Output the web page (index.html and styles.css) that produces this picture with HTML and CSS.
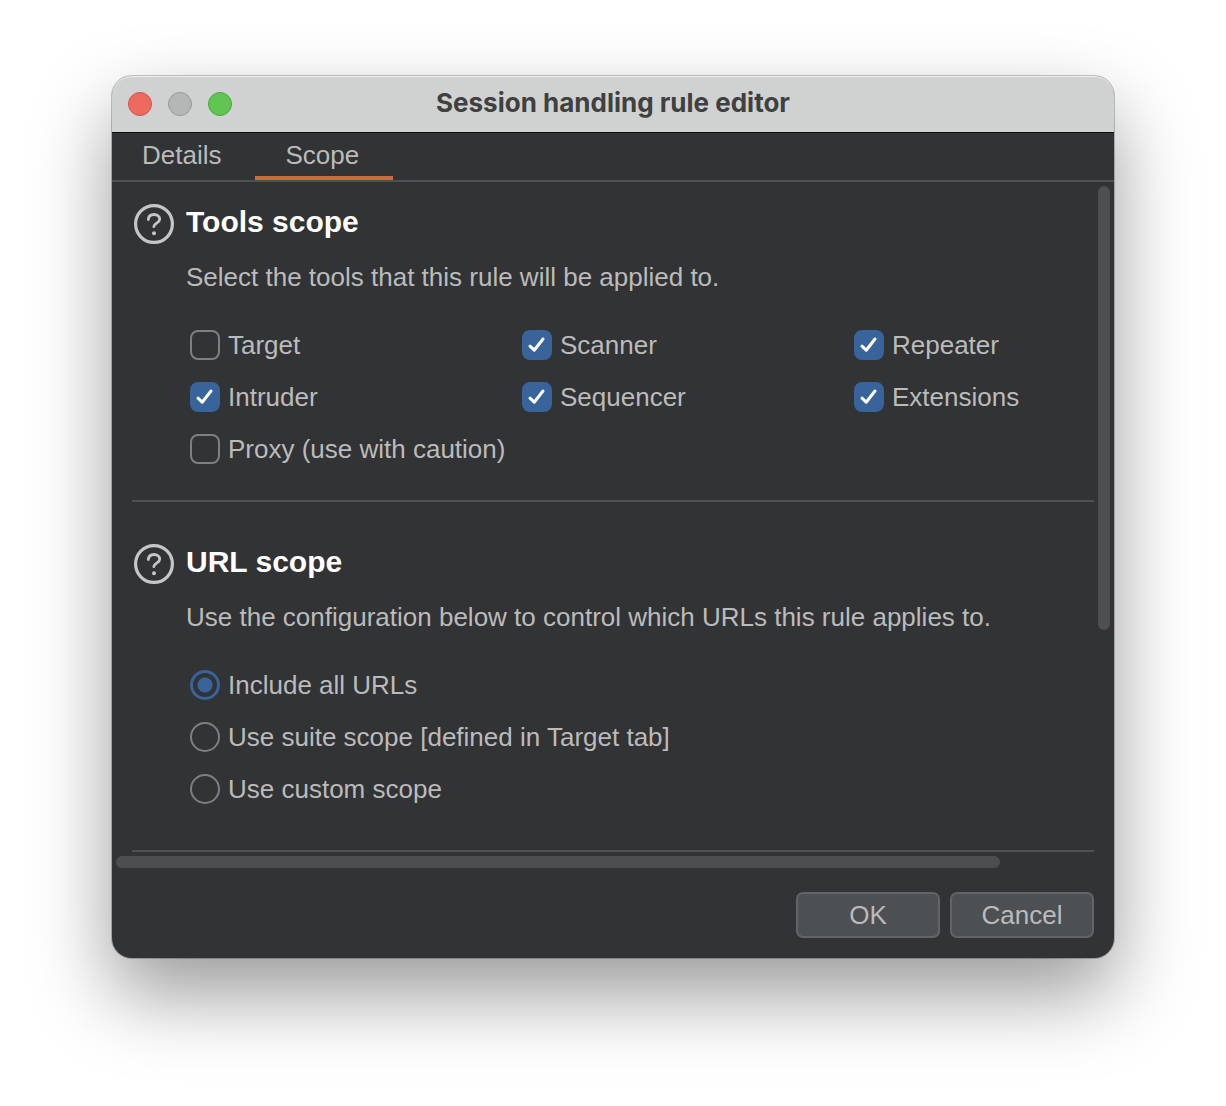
FILE: index.html
```html
<!DOCTYPE html>
<html lang="en">
<head>
<meta charset="utf-8">
<title>Session handling rule editor</title>
<link rel="stylesheet" href="styles.css">
</head>
<body>
<main class="window">
  <header class="titlebar">
    <div class="lights">
      <button class="light light-close" type="button" aria-label="Close"></button>
      <button class="light light-minimize" type="button" aria-label="Minimize" disabled></button>
      <button class="light light-zoom" type="button" aria-label="Zoom"></button>
    </div>
    <h1 class="title">Session handling rule editor</h1>
  </header>
  <nav class="tabs" role="tablist">
    <button class="tab" type="button" role="tab" aria-selected="false">Details</button>
    <button class="tab tab-active" type="button" role="tab" aria-selected="true">Scope</button>
  </nav>
  <div class="viewport">
    <div class="content">
      <section class="section">
        <button class="help" type="button" aria-label="Help on tools scope">
          <svg width="40" height="40" viewBox="0 0 40 40" fill="none" stroke="#c5c6c7"><circle cx="20" cy="20" r="18.4" stroke-width="3.2"/><path d="M14.3 15.5C14.6 12.3 16.8 10.5 20 10.5C23.3 10.5 25.7 12.6 25.7 15.3C25.7 19 20.4 18.6 19.8 22.6" stroke-width="2.8" stroke-linecap="round"/><circle cx="20" cy="29.2" r="2" fill="#c5c6c7" stroke="none"/></svg>
        </button>
        <div class="section-body">
          <h2 class="heading">Tools scope</h2>
          <p class="description">Select the tools that this rule will be applied to.</p>
          <div class="options options-tools">
            <label class="option"><input class="check" type="checkbox">Target</label>
            <label class="option"><input class="check" type="checkbox" checked>Scanner</label>
            <label class="option"><input class="check" type="checkbox" checked>Repeater</label>
            <label class="option"><input class="check" type="checkbox" checked>Intruder</label>
            <label class="option"><input class="check" type="checkbox" checked>Sequencer</label>
            <label class="option"><input class="check" type="checkbox" checked>Extensions</label>
            <label class="option"><input class="check" type="checkbox">Proxy (use with caution)</label>
          </div>
        </div>
      </section>
      <section class="section section-url">
        <button class="help" type="button" aria-label="Help on URL scope">
          <svg width="40" height="40" viewBox="0 0 40 40" fill="none" stroke="#c5c6c7"><circle cx="20" cy="20" r="18.4" stroke-width="3.2"/><path d="M14.3 15.5C14.6 12.3 16.8 10.5 20 10.5C23.3 10.5 25.7 12.6 25.7 15.3C25.7 19 20.4 18.6 19.8 22.6" stroke-width="2.8" stroke-linecap="round"/><circle cx="20" cy="29.2" r="2" fill="#c5c6c7" stroke="none"/></svg>
        </button>
        <div class="section-body">
          <h2 class="heading">URL scope</h2>
          <p class="description">Use the configuration below to control which URLs this rule applies to.</p>
          <div class="options">
            <label class="option"><input class="radio" type="radio" name="url-scope" checked>Include all URLs</label>
            <label class="option"><input class="radio" type="radio" name="url-scope">Use suite scope [defined in Target tab]</label>
            <label class="option"><input class="radio" type="radio" name="url-scope">Use custom scope</label>
          </div>
        </div>
      </section>
    </div>
    <div class="track track-vertical"><div class="thumb thumb-vertical"></div></div>
    <div class="track track-horizontal"><div class="thumb thumb-horizontal"></div></div>
  </div>
  <footer class="actions">
    <button class="button" type="button">OK</button>
    <button class="button" type="button">Cancel</button>
  </footer>
</main>
</body>
</html>
```
FILE: styles.css
```css
* {
  box-sizing: border-box;
}

body {
  margin: 0;
  padding: 76px 112px 148px;
  background: #fff;
  color: #bbb;
  font: 26px/32px "Liberation Sans", Arial, sans-serif;
}

button {
  margin: 0;
  padding: 0;
  border: 0;
  background: none;
  color: inherit;
  font: inherit;
}

.window {
  border-radius: 20px;
  background: #323335;
  box-shadow: 0 0 0 1px rgba(0, 0, 0, .22), 0 36px 80px rgba(0, 0, 0, .4);
}

.titlebar {
  display: grid;
  grid-template-columns: 120px 1fr 120px;
  align-items: center;
  height: 57px;
  padding: 0 16px;
  border-bottom: 1px solid #0a0b0b;
  border-radius: 20px 20px 0 0;
  background: #d0d2d1;
  box-shadow: inset 0 1px 0 #eceded;
}

.lights {
  display: flex;
  gap: 16px;
}

.light {
  width: 24px;
  height: 24px;
  border: 1px solid;
  border-radius: 50%;
}

.light-close {
  border-color: #d45147;
  background: #ed6a5e;
}

.light-minimize {
  border-color: #979999;
  background: #b5b7b6;
}

.light-zoom {
  border-color: #4ca73b;
  background: #61c554;
}

.title {
  margin: 0;
  padding-bottom: 2px;
  color: #3f4040;
  font: bold 26px/32px Inter, sans-serif;
  text-align: center;
}

.tabs {
  display: flex;
  height: 49px;
  border-bottom: 2px solid #4f5052;
}

.tab {
  padding: 0 34px 0 30px;
  border-bottom: 4px solid transparent;
}

.tab-active {
  border-color: #cc6b3d;
}

.viewport {
  display: grid;
  grid-template-columns: 1fr 16px;
  grid-template-rows: auto 20px;
}

.content {
  padding: 0 4px 0 20px;
}

.section {
  display: flex;
  gap: 12px;
  padding: 22px 0 35px 2px;
  border-bottom: 2px solid #4f5052;
}

.section-url {
  padding-top: 42px;
  padding-bottom: 45px;
}

.help {
  flex: none;
  width: 40px;
  height: 40px;
}

.help svg {
  display: block;
}

.section-body {
  flex: 1;
}

.heading {
  margin: 0 0 21px;
  color: #fff;
  font: bold 30px/36px "Liberation Sans", Arial, sans-serif;
}

.description {
  margin: 0;
}

.options {
  display: grid;
  gap: 20px;
  padding: 36px 0 0 4px;
}

.options-tools {
  grid-template-columns: repeat(3, 1fr);
  column-gap: 60px;
  margin-right: -32px;
}

.option {
  display: flex;
  align-items: center;
  gap: 8px;
  min-width: 0;
  white-space: nowrap;
}

.check,
.radio {
  flex: none;
  width: 30px;
  height: 30px;
  margin: 0;
  border: 2px solid #7e7f80;
  appearance: none;
}

.check {
  border-radius: 8px;
}

.check:checked {
  border-color: #38639b;
  background: #38639b url("data:image/svg+xml,%3Csvg xmlns='http://www.w3.org/2000/svg' viewBox='0 0 30 30'%3E%3Cpath d='M8 16.2 12.2 20.2 21 9' fill='none' stroke='%23fff' stroke-width='3' stroke-linecap='round' stroke-linejoin='round'/%3E%3C/svg%3E") center / 30px 30px border-box;
}

.radio {
  border-radius: 50%;
}

.radio:checked {
  border: 3px solid #38639b;
  background: radial-gradient(circle, #38639b 7px, transparent 8px);
}

.thumb {
  border-radius: 6px;
  background: #4d4e50;
}

.track-vertical {
  padding: 4px 4px 4px 0;
}

.thumb-vertical {
  width: 12px;
  height: 67%;
}

.track-horizontal {
  grid-column: 1;
  padding: 4px 0 4px 4px;
}

.thumb-horizontal {
  width: 90%;
  height: 12px;
}

.actions {
  display: flex;
  justify-content: flex-end;
  gap: 10px;
  padding: 20px;
}

.button {
  width: 144px;
  height: 46px;
  border: 2px solid #616365;
  border-radius: 7px;
  background: #4c5052;
}
```
